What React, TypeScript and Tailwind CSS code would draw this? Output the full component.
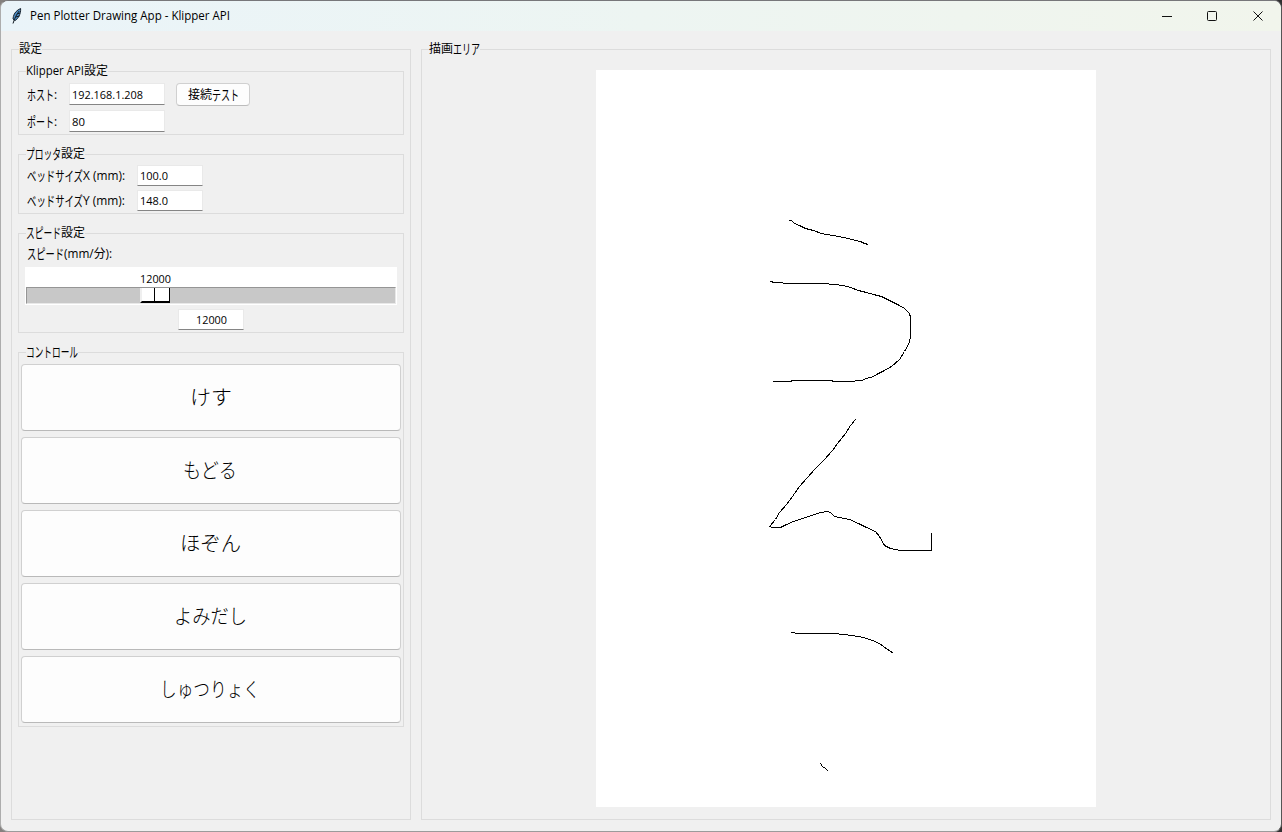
import { useLayoutEffect, useRef, type ReactNode } from "react";

/** Sets a run of text to the exact advance width of its slot. */
function Run({ w, className = "", children }: { w: number; className?: string; children: string }) {
  const ref = useRef<HTMLSpanElement>(null);
  useLayoutEffect(() => {
    const el = ref.current;
    if (el && el.offsetWidth) {
      el.style.transform = `scaleX(${w / el.getBoundingClientRect().width})`;
    }
  }, [w]);
  return (
    <span className={`inline-block whitespace-pre align-top ${className}`} style={{ width: w }}>
      <span ref={ref} className="inline-block origin-left whitespace-pre">
        {children}
      </span>
    </span>
  );
}

/** Condensed kana, a little taller than the Latin text beside it. */
function Kana({ w, children }: { w: number; children: string }) {
  return (
    <Run w={w} className="text-[14px]">
      {children}
    </Run>
  );
}

function Group({ legend, className, children }: { legend: ReactNode; className: string; children: ReactNode }) {
  return (
    <section className={`relative border border-[#dcdcdc] ${className}`}>
      <h2 className="absolute -top-[11px] left-[7px] flex h-5 bg-[#f0f0f0] leading-5">{legend}</h2>
      {children}
    </section>
  );
}

function Entry({ className, children }: { className: string; children: ReactNode }) {
  return (
    <div className={`flex items-center border border-[#e9e9e9] border-b-[#858585] bg-white text-[11px] ${className}`}>
      {children}
    </div>
  );
}

function BigButton({ children }: { children: ReactNode }) {
  return (
    <button className="flex h-[67px] w-[380px] items-center justify-center rounded-[4px] border border-[#d0d0d0] border-b-[#b9b9b9] bg-[#fdfdfd] pr-[2px] text-[20px] leading-6 font-light">
      {children}
    </button>
  );
}

const strokes = [
  "788,220 791,220 794,223 799,225 805,228 813,230 821,233 838,236 848,238 855,240 860,241 864,243 868,244",
  "770,281 774,282 790,283 822,283 834,284 843,285 850,287 858,290 866,292 873,294 881,296 889,300 897,304 904,308 909,313 910,317 910,337 908,344 904,351 899,359 891,366 884,370 878,373 873,376 866,378 861,380 849,381 833,381 831,380 792,380 790,381 772,381",
  "855,419 850,425 845,433 841,438 837,443 832,450 824,459 815,468 807,477 799,486 792,496 786,504 779,512 775,519 769,526 772,527 780,527 786,524 793,521 802,518 811,515 820,512 827,511 830,512 834,516 849,519 858,523 866,527 875,531 879,536 883,543 884,545 890,548 900,550 931,550 931,532",
  "791,632 798,633 834,633 852,635 863,637 872,640 879,643 883,646 893,653",
  "820,763 822,766 825,768 828,771",
];

export default function App() {
  return (
    <div className="h-[832px] w-[1282px] overflow-hidden bg-gradient-to-r from-[#85817f] to-[#303030] font-['Open_Sans','Noto_Sans_CJK_JP',sans-serif] text-[12px] text-black">
      <div className="flex h-full w-full flex-col overflow-hidden rounded-[8px] border border-t-[#77777a] border-r-[#555] border-b-[#9b9b9b] border-l-[#adadad] bg-[#f0f0f0]">
        <header className="flex h-[30px] shrink-0 items-center bg-gradient-to-r from-[#eaf4f9] via-[#edf5f2] to-[#f1f5ec]">
          <svg className="ml-[10px] h-4 w-3 shrink-0" viewBox="0 0 12 16">
            <path d="M9.6.5C6 2 3.1 5 2.4 8.5L2 11l2 1.5C7 11 10 6 9.6.5Z" fill="#4d8fc9" stroke="#17202a" strokeWidth="1" />
            <path d="M8.2 3C5.4 6.5 3.8 10 2 15.5M4.5 9 8.5 8M6 6l3-1" fill="none" stroke="#101820" strokeWidth="1" />
          </svg>
          <h1 className="ml-[7px] flex leading-5">
            <Run w={200}>Pen Plotter Drawing App - Klipper API</Run>
          </h1>
          <svg className="ml-auto mr-[17px] h-[12px] w-[102px]" viewBox="0 0 102 12" fill="none" stroke="#111">
            <path d="M0 6.5h10" shapeRendering="crispEdges" />
            <rect x="45.5" y="1.5" width="9" height="9" rx="1" />
            <path d="m91.5 1.5 9 9m0-9-9 9" />
          </svg>
        </header>

        <main className="flex gap-[10px] pt-[18px] pl-[10px]">
          <Group className="h-[771px] w-[400px] pt-[21px] pl-[6px]" legend={<Run w={23}>設定</Run>}>
            <Group
              className="h-[64px] w-[386px] pt-[11px] pl-[8px]"
              legend={
                <>
                  <Run w={58}>Klipper API</Run>
                  <Run w={24}>設定</Run>
                </>
              }
            >
              <div className="flex h-[27px] items-start">
                <label className="flex w-[42px] leading-6">
                  <Kana w={27}>ホスト</Kana>:
                </label>
                <Entry className="h-[22px] w-[96px] pt-[2px] pl-[2px]">
                  <Run w={71}>192.168.1.208</Run>
                </Entry>
                <button className="ml-[11px] flex h-[23px] w-[74px] items-center justify-center rounded-[4px] border border-[#d0d0d0] border-b-[#bcbcbc] bg-[#fdfdfd] leading-5">
                  <Run w={24}>接続</Run>
                  <Kana w={27}>テスト</Kana>
                </button>
              </div>
              <div className="flex items-start">
                <label className="flex w-[42px] leading-6">
                  <Kana w={27}>ポート</Kana>:
                </label>
                <Entry className="h-[22px] w-[96px] pt-[2px] pl-[2px]">
                  <Run w={13}>80</Run>
                </Entry>
              </div>
            </Group>

            <Group
              className="mt-[19px] h-[60px] w-[386px] pt-[10px] pl-[8px]"
              legend={
                <>
                  <Kana w={35}>プロッタ</Kana>
                  <Run w={24}>設定</Run>
                </>
              }
            >
              <div className="flex h-[25px] items-start">
                <label className="flex w-[110px] leading-[21px]">
                  <Kana w={56}>ベッドサイズ</Kana>
                  <Run w={42}>X (mm):</Run>
                </label>
                <Entry className="h-[21px] w-[66px] pt-px pl-[2px]">
                  <Run w={28}>100.0</Run>
                </Entry>
              </div>
              <div className="flex items-start">
                <label className="flex w-[110px] leading-[21px]">
                  <Kana w={56}>ベッドサイズ</Kana>
                  <Run w={42}>Y (mm):</Run>
                </label>
                <Entry className="h-[21px] w-[66px] pt-px pl-[2px]">
                  <Run w={28}>148.0</Run>
                </Entry>
              </div>
            </Group>

            <Group
              className="mt-[19px] flex h-[100px] w-[386px] flex-col pt-[10px]"
              legend={
                <>
                  <Kana w={35}>スピード</Kana>
                  <Run w={24}>設定</Run>
                </>
              }
            >
              <label className="flex h-5 pl-[8px] leading-5">
                <Kana w={37}>スピード</Kana>
                <Run w={48}>(mm/分):</Run>
              </label>
              <div className="mt-[3px] ml-[6px] w-[372px] bg-white px-px pb-px">
                <div className="flex h-5 pt-[2px] pl-[114px] text-[11px] leading-5">
                  <Run w={31}>12000</Run>
                </div>
                <div className="flex h-[17px] border border-t-[#959595] border-r-[#e8e8e8] border-b-[#e8e8e8] border-l-[#959595] bg-[#c8c8c8] pl-[113px]">
                  <div className="flex h-[15px] w-[30px] border-r border-b-2 border-l-2 border-black border-l-[#efefef] bg-white">
                    <div className="ml-[12px] h-full w-px bg-black" />
                  </div>
                </div>
              </div>
              <Entry className="mx-auto mt-[4px] h-[21px] w-[66px] justify-center pt-px">
                <Run w={31}>12000</Run>
              </Entry>
            </Group>

            <Group
              className="mt-[19px] flex h-[375px] w-[386px] flex-col gap-[6px] pt-[11px] pl-[2px]"
              legend={<Kana w={52}>コントロール</Kana>}
            >
              <BigButton>
                <Run w={42}>けす</Run>
              </BigButton>
              <BigButton>
                <Run w={54}>もどる</Run>
              </BigButton>
              <BigButton>
                <Run w={61}>ほぞん</Run>
              </BigButton>
              <BigButton>
                <Run w={73}>よみだし</Run>
              </BigButton>
              <BigButton>
                <Run w={100}>しゅつりょく</Run>
              </BigButton>
            </Group>
          </Group>

          <Group
            className="flex h-[771px] w-[850px] justify-center pt-[20px]"
            legend={
              <>
                <Run w={24}>描画</Run>
                <Kana w={27}>エリア</Kana>
              </>
            }
          >
            <div className="h-[737px] w-[500px] bg-white">
              <svg className="block h-full w-full" viewBox="595.5 69.5 500 737" fill="none" stroke="#000" shapeRendering="crispEdges">
                {strokes.map((points) => (
                  <polyline key={points} points={points} />
                ))}
              </svg>
            </div>
          </Group>
        </main>
      </div>
    </div>
  );
}
